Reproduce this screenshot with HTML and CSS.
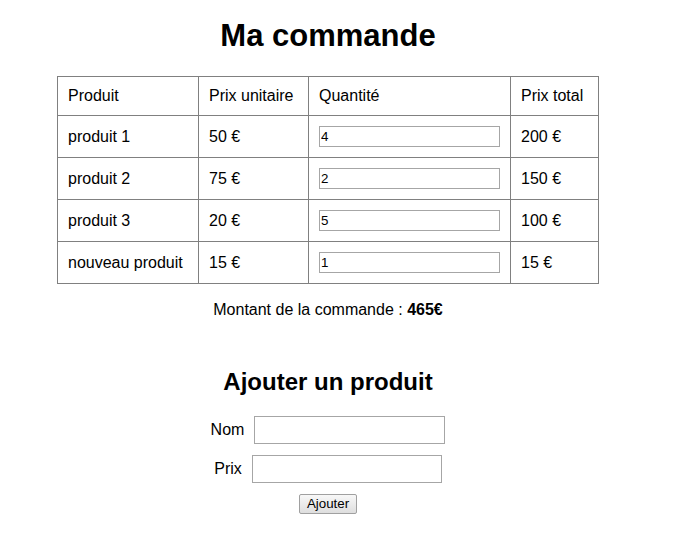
FILE: index.html
```html
<!DOCTYPE html>
<html lang="fr">
<head>
<meta charset="utf-8">
<title>Ma commande</title>
<link rel="stylesheet" href="styles.css">
</head>
<body>
<div class="page">
  <h1 class="title">Ma commande</h1>
  <table class="order">
    <colgroup>
      <col class="c-name">
      <col class="c-unit">
      <col class="c-qty">
      <col class="c-total">
    </colgroup>
    <thead>
      <tr><th>Produit</th><th>Prix unitaire</th><th>Quantité</th><th>Prix total</th></tr>
    </thead>
    <tbody>
      <tr><td>produit 1</td><td>50 €</td><td><input class="qty" type="text" value="4"></td><td>200 €</td></tr>
      <tr><td>produit 2</td><td>75 €</td><td><input class="qty" type="text" value="2"></td><td>150 €</td></tr>
      <tr><td>produit 3</td><td>20 €</td><td><input class="qty" type="text" value="5"></td><td>100 €</td></tr>
      <tr><td>nouveau produit</td><td>15 €</td><td><input class="qty" type="text" value="1"></td><td>15 €</td></tr>
    </tbody>
  </table>
  <p class="total">Montant de la commande : <strong>465€</strong></p>

  <h2 class="subtitle">Ajouter un produit</h2>
  <form class="add-form">
    <div class="field"><label class="lbl">Nom</label><input class="txt txt-nom" type="text"></div>
    <div class="field"><label class="lbl">Prix</label><input class="txt txt-prix" type="text"></div>
    <button class="btn" type="button">Ajouter</button>
  </form>
</div>
</body>
</html>
```

FILE: styles.css
```css
html, body {
  margin: 0;
  padding: 0;
  background: #fff;
}

body {
  font-family: "Liberation Sans", Arial, sans-serif;
  font-size: 16px;
  color: #000;
}

.page {
  width: 640px;
  margin-left: 8px;
  padding-top: 18px;
  text-align: center;
}

.title {
  font-size: 31px;
  line-height: 36px;
  font-weight: 700;
  margin: 0 0 22px;
}

.order {
  border-collapse: collapse;
  table-layout: fixed;
  width: 541px;
  margin: 0 auto;
  text-align: left;
}

.c-name { width: 141px; }
.c-unit { width: 110px; }
.c-qty { width: 202px; }
.c-total { width: 88px; }

.order th,
.order td {
  border: 1px solid #808080;
  padding: 10px;
  line-height: 18px;
  font-weight: 400;
  vertical-align: middle;
  white-space: nowrap;
}

.qty {
  display: block;
  box-sizing: border-box;
  width: 100%;
  height: 21px;
  margin: 0;
  padding: 1px 1px;
  border: 1px solid #a6a6a6;
  border-radius: 0;
  font-family: "Liberation Sans", Arial, sans-serif;
  font-size: 13.33px;
  color: #000;
  background: #fff;
}

.total {
  margin: 17px 0 0;
  line-height: 18px;
}

.total strong {
  font-weight: 700;
}

.subtitle {
  font-size: 24px;
  line-height: 28px;
  font-weight: 700;
  margin: 49px 0 20px;
}

.add-form {
  display: flex;
  flex-direction: column;
  align-items: center;
  gap: 11px;
}

.field {
  display: flex;
  align-items: center;
  gap: 10px;
}

.lbl {
  line-height: 18px;
}

.txt {
  box-sizing: border-box;
  height: 28px;
  margin: 0;
  padding: 2px 4px;
  border: 1px solid #a6a6a6;
  border-radius: 0;
  font-family: "Liberation Sans", Arial, sans-serif;
  font-size: 13.33px;
  background: #fff;
}

.txt-nom { width: 191px; }
.txt-prix { width: 190px; }

.btn {
  box-sizing: border-box;
  height: 20px;
  width: 58px;
  padding: 0 6px;
  margin: 0;
  border: 1px solid #a0a0a0;
  border-radius: 2px;
  background: linear-gradient(#f8f8f8, #dedede);
  font-family: "Liberation Sans", Arial, sans-serif;
  font-size: 13.33px;
  color: #000;
  line-height: 16px;
}
```
